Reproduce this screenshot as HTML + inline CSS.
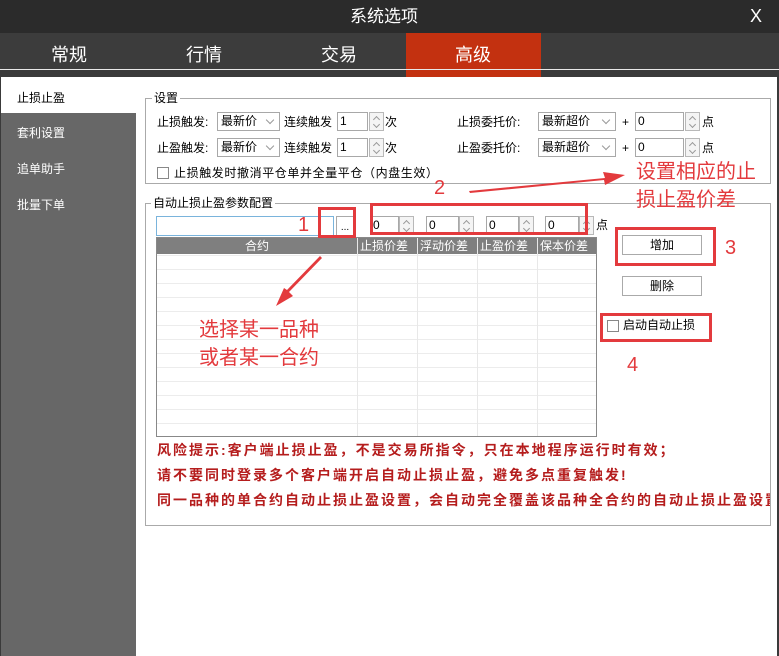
<!DOCTYPE html><html><head><meta charset="utf-8"><style>
*{margin:0;padding:0;box-sizing:border-box}
body{width:779px;height:656px;overflow:hidden;background:#3a3a3a;font-family:"Liberation Sans","Microsoft YaHei","Noto Sans CJK SC",sans-serif;font-size:12px;color:#000;position:relative}
.a{position:absolute}
.t{position:absolute;white-space:nowrap;line-height:14px}
.combo{position:absolute;border:1px solid #a8a8a8;background:#fff;height:19px;padding-left:3px;line-height:17px}
.combo:after{content:"";position:absolute;right:6px;top:4px;width:5px;height:5px;border-right:1px solid #999;border-bottom:1px solid #999;transform:rotate(45deg)}
.inp{position:absolute;border:1px solid #a8a8a8;background:#fff;height:19px;padding-left:2px;line-height:17px}
.spin{position:absolute;border:1px solid #b8b8b8;background:#f4f4f4;height:19px;width:15px}
.spin:before,.spin:after{content:"";position:absolute;left:4px;width:4px;height:4px;border-left:1px solid #999;border-top:1px solid #999}
.spin:before{top:4px;transform:rotate(45deg)}
.spin:after{top:9px;transform:rotate(225deg)}
.grp{position:absolute;border:1px solid #aaa}
.gt{position:absolute;background:#fff;padding:0 2px;line-height:14px}
.cb{position:absolute;width:12px;height:12px;border:1px solid #888;background:#fff}
.btn{position:absolute;border:1px solid #aaa;background:#fff;text-align:center;line-height:18px;width:80px;height:20px}
.rb{position:absolute;border:3px solid #e33a3d}
.rn{position:absolute;color:#e33a3d;font-size:20px;line-height:20px}
.rt{position:absolute;color:#e33a3d;font-size:20px;line-height:28px;white-space:nowrap}
.warn{position:absolute;left:12px;color:#b51d1d;font-weight:bold;font-size:14px;white-space:nowrap;line-height:16px;font-family:"Liberation Sans","Noto Sans CJK SC",sans-serif;letter-spacing:2px}
</style></head><body>
<div class="a" style="left:0;top:0;width:779px;height:33px;background:#2b2b2b"></div>
<div class="t" style="left:350px;top:8px;color:#fff;font-size:17px;line-height:18px">系统选项</div>
<div class="t" style="left:750px;top:7px;color:#fff;font-size:18px;line-height:18px">X</div>
<div class="a" style="left:0;top:33px;width:779px;height:36px;background:#3c3c3c"></div>
<div class="a" style="left:406px;top:33px;width:135px;height:44px;background:#c33110"></div>
<div class="a" style="left:0;top:69px;width:779px;height:1px;background:#e8e8e8"></div>
<div class="t" style="left:51px;top:45px;color:#fff;font-size:18px;line-height:20px">常规</div>
<div class="t" style="left:186px;top:45px;color:#fff;font-size:18px;line-height:20px">行情</div>
<div class="t" style="left:321px;top:45px;color:#fff;font-size:18px;line-height:20px">交易</div>
<div class="t" style="left:455px;top:45px;color:#fff;font-size:18px;line-height:20px">高级</div>
<div class="a" style="left:1px;top:77px;width:776px;height:579px;background:#fff"></div>
<div class="a" style="left:1px;top:113px;width:135px;height:543px;background:#676767"></div>
<div class="t" style="left:17px;top:91px">止损止盈</div>
<div class="t" style="left:17px;top:126px;color:#fff">套利设置</div>
<div class="t" style="left:17px;top:162px;color:#fff">追单助手</div>
<div class="t" style="left:17px;top:198px;color:#fff">批量下单</div>

<div class="grp" style="left:145px;top:98px;width:626px;height:86px"></div>
<div class="gt" style="left:152px;top:91px">设置</div>
<div class="t" style="left:157px;top:115px">止损触发:</div>
<div class="combo" style="left:217px;top:112px;width:63px">最新价</div>
<div class="t" style="left:284px;top:115px">连续触发</div>
<div class="inp" style="left:337px;top:112px;width:31px">1</div><div class="spin" style="left:369px;top:112px"></div>
<div class="t" style="left:385px;top:115px">次</div>
<div class="t" style="left:457px;top:115px">止损委托价:</div>
<div class="combo" style="left:538px;top:112px;width:78px">最新超价</div>
<div class="t" style="left:622px;top:115px">+</div>
<div class="inp" style="left:635px;top:112px;width:49px">0</div><div class="spin" style="left:685px;top:112px"></div>
<div class="t" style="left:702px;top:115px">点</div>
<div class="t" style="left:157px;top:141px">止盈触发:</div>
<div class="combo" style="left:217px;top:138px;width:63px">最新价</div>
<div class="t" style="left:284px;top:141px">连续触发</div>
<div class="inp" style="left:337px;top:138px;width:31px">1</div><div class="spin" style="left:369px;top:138px"></div>
<div class="t" style="left:385px;top:141px">次</div>
<div class="t" style="left:457px;top:141px">止盈委托价:</div>
<div class="combo" style="left:538px;top:138px;width:78px">最新超价</div>
<div class="t" style="left:622px;top:141px">+</div>
<div class="inp" style="left:635px;top:138px;width:49px">0</div><div class="spin" style="left:685px;top:138px"></div>
<div class="t" style="left:702px;top:141px">点</div>
<div class="cb" style="left:157px;top:167px"></div>
<div class="t" style="left:174px;top:166px;letter-spacing:0.6px">止损触发时撤消平仓单并全量平仓（内盘生效）</div>

<div class="grp" style="left:145px;top:203px;width:626px;height:323px"></div>
<div class="gt" style="left:151px;top:196px">自动止损止盈参数配置</div>
<div class="a" style="left:156px;top:216px;width:178px;height:20px;border:1px solid #7ab4dc;background:#fff"></div>
<div class="a" style="left:336px;top:216px;width:18px;height:20px;border:1px solid #aaa;background:#fff;font-size:10px;text-align:center;line-height:22px">...</div>
<div class="inp" style="left:370px;top:216px;width:29px">0</div><div class="spin" style="left:399px;top:216px"></div>
<div class="inp" style="left:426px;top:216px;width:33px">0</div><div class="spin" style="left:459px;top:216px"></div>
<div class="inp" style="left:486px;top:216px;width:33px">0</div><div class="spin" style="left:519px;top:216px"></div>
<div class="inp" style="left:545px;top:216px;width:34px">0</div><div class="spin" style="left:579px;top:216px"></div>
<div class="t" style="left:596px;top:218px">点</div>

<div class="a" style="left:156px;top:237px;width:441px;height:200px;border:1px solid #888;background:#fff;
background-image:repeating-linear-gradient(to bottom,transparent 0,transparent 13px,#ececec 13px,#ececec 14px);background-position:0 4px"></div>
<div class="a" style="left:157px;top:238px;width:439px;height:16px;background:#7f7f7f"></div>
<div class="a" style="left:357px;top:238px;width:1px;height:198px;background:#e8e8e8"></div>
<div class="a" style="left:417px;top:238px;width:1px;height:198px;background:#e8e8e8"></div>
<div class="a" style="left:477px;top:238px;width:1px;height:198px;background:#e8e8e8"></div>
<div class="a" style="left:537px;top:238px;width:1px;height:198px;background:#e8e8e8"></div>
<div class="t" style="left:245px;top:239px;color:#fff">合约</div>
<div class="t" style="left:360px;top:239px;color:#fff">止损价差</div>
<div class="t" style="left:420px;top:239px;color:#fff">浮动价差</div>
<div class="t" style="left:480px;top:239px;color:#fff">止盈价差</div>
<div class="t" style="left:540px;top:239px;color:#fff">保本价差</div>

<div class="btn" style="left:622px;top:235px">增加</div>
<div class="btn" style="left:622px;top:276px">删除</div>
<div class="cb" style="left:607px;top:320px"></div>
<div class="t" style="left:623px;top:318px">启动自动止损</div>

<div class="a" style="left:145px;top:440px;width:625px;height:80px;overflow:hidden">
<div class="warn" style="top:2px">风险提示:客户端止损止盈，不是交易所指令，只在本地程序运行时有效；</div>
<div class="warn" style="top:27px">请不要同时登录多个客户端开启自动止损止盈，避免多点重复触发!</div>
<div class="warn" style="top:52px">同一品种的单合约自动止损止盈设置，会自动完全覆盖该品种全合约的自动止损止盈设置</div>
</div>

<div class="rb" style="left:318px;top:207px;width:38px;height:31px"></div>
<div class="rb" style="left:370px;top:203px;width:218px;height:32px"></div>
<div class="rb" style="left:615px;top:227px;width:101px;height:39px"></div>
<div class="rb" style="left:600px;top:313px;width:112px;height:29px"></div>
<div class="rn" style="left:298px;top:215px">1</div>
<div class="rn" style="left:434px;top:178px">2</div>
<div class="rn" style="left:725px;top:238px">3</div>
<div class="rn" style="left:627px;top:355px">4</div>
<div class="rt" style="left:636px;top:158px">设置相应的止</div>
<div class="rt" style="left:636px;top:186px">损止盈价差</div>
<div class="rt" style="left:199px;top:316px">选择某一品种</div>
<div class="rt" style="left:199px;top:344px">或者某一合约</div>
<svg class="a" style="left:0;top:0" width="779" height="656">
<polygon points="469,191 605,178 603,172 625,175 605,185 604,180 470,193" fill="#e33a3d"/>
<polygon points="322,258 289,292 293,296 276,306 284,288 287,290 320,256" fill="#e33a3d"/>
</svg>
</body></html>
